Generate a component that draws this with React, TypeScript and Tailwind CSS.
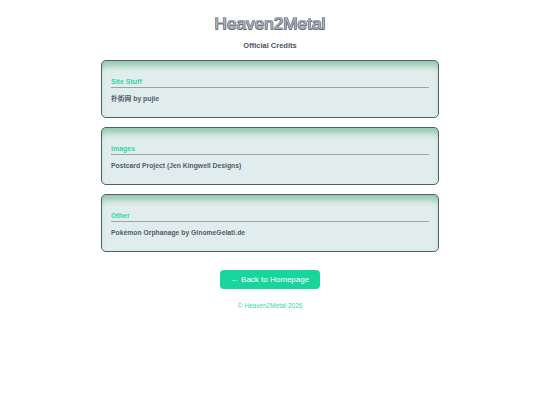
import React from "react";

const sections = [
  { title: "Site Stuff", body: "扑街网 by pujie" },
  { title: "Images", body: "Postcard Project (Jen Kingwell Designs)" },
  { title: "Other", body: "Pokémon Orphanage by GinomeGelati.de" },
];

export default function App() {
  return (
    <div
      className="min-h-[405px] w-full bg-white flex flex-col items-center pt-[13px]"
      style={{ fontFamily: '"Liberation Sans", Arial, "Noto Sans CJK SC", sans-serif' }}
    >
      <h1
        className="text-[17px] leading-[22px] text-[#aeb1b7] tracking-[0.1px]"
        style={{
          textShadow:
            "-0.5px -0.5px 0 #646b78, 0.5px -0.5px 0 #646b78, -0.5px 0.5px 0 #646b78, 0.5px 0.5px 0 #646b78",
        }}
      >
        Heaven2Metal
      </h1>
      <p className="mt-[6px] text-[7.5px] leading-[10px] font-bold text-[#4b5563]">Official Credits</p>

      <div className="mt-[9px] w-[338px] flex flex-col gap-[9px]">
        {sections.map((s) => (
          <div
            key={s.title}
            className="h-[58px] rounded-[5px] border border-[#535c6b] bg-[#e1eded] px-[9px] pt-[16px] shadow-[inset_0_8px_6px_-3px_rgba(122,190,150,0.75)]"
          >
            <div className="border-b border-[#9aa4ab] pb-[1px] text-[7px] leading-[9px] font-bold text-[#34d6a0]">
              {s.title}
            </div>
            <div className="mt-[6px] text-[6.8px] leading-[10px] font-bold text-[#535c6b]">{s.body}</div>
          </div>
        ))}
      </div>

      <button className="mt-[18px] w-[100px] h-[19px] rounded-[4px] bg-[#18d59c] text-white text-[8px] leading-[19px]">
        ← Back to Homepage
      </button>
      <p className="mt-[12px] text-[6.5px] leading-[9px] text-[#3fd4a6]">© Heaven2Metal 2026</p>
    </div>
  );
}
